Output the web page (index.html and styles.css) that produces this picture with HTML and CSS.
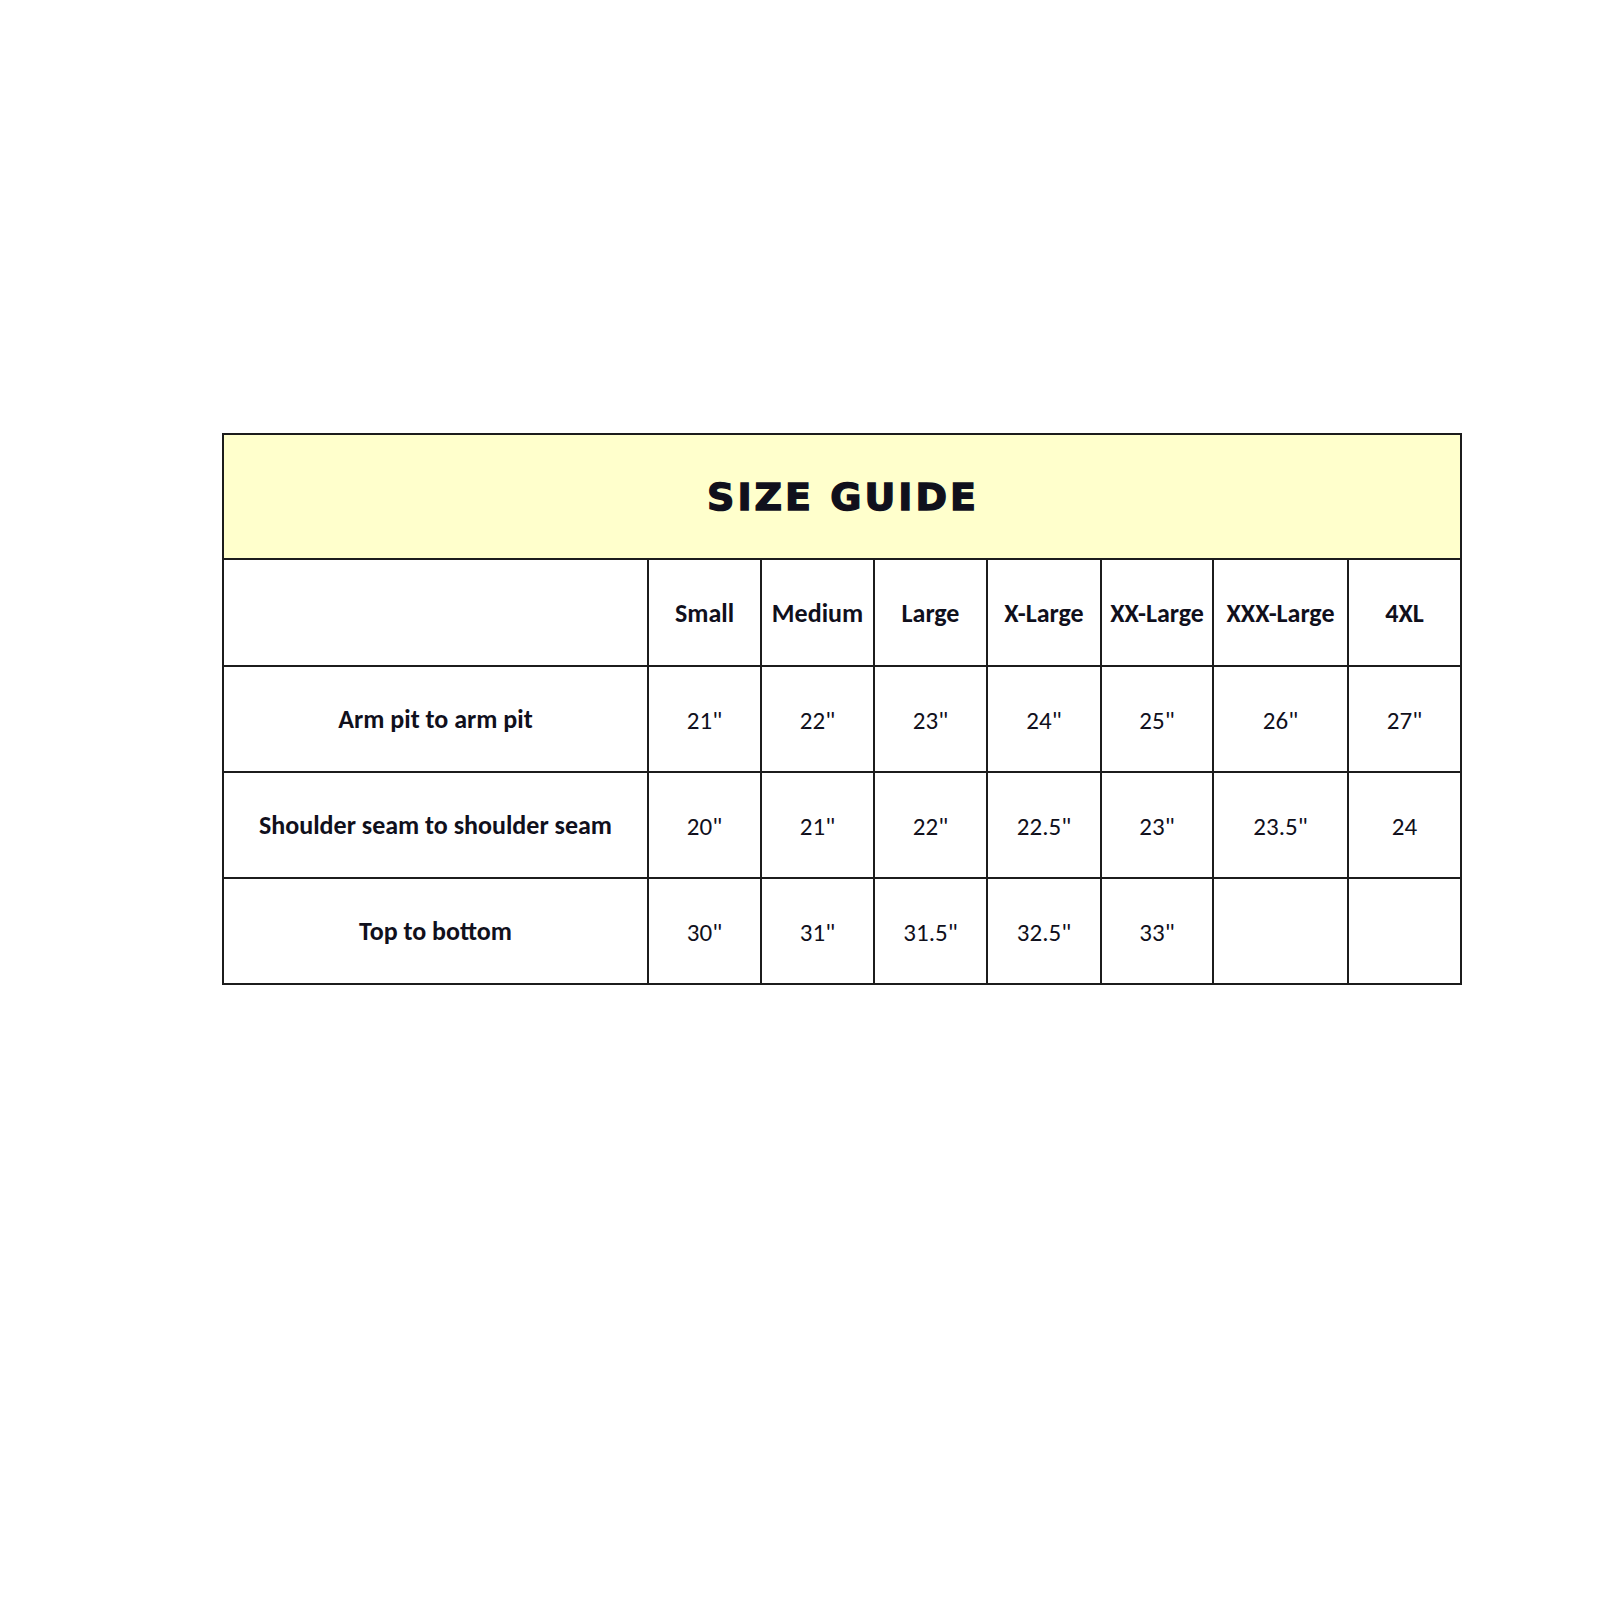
FILE: index.html
```html
<!DOCTYPE html>
<html>
<head>
<meta charset="utf-8">
<link rel="stylesheet" href="styles.css">
</head>
<body>
<div class="page">
  <div class="sheet">
    <div class="title">SIZE GUIDE</div>
    <div class="cell"></div>
    <div class="cell head">Small</div>
    <div class="cell head">Medium</div>
    <div class="cell head">Large</div>
    <div class="cell head">X-Large</div>
    <div class="cell head">XX-Large</div>
    <div class="cell head">XXX-Large</div>
    <div class="cell head">4XL</div>

    <div class="cell label">Arm pit to arm pit</div>
    <div class="cell val">21"</div>
    <div class="cell val">22"</div>
    <div class="cell val">23"</div>
    <div class="cell val">24"</div>
    <div class="cell val">25"</div>
    <div class="cell val">26"</div>
    <div class="cell val">27"</div>

    <div class="cell label">Shoulder seam to shoulder seam</div>
    <div class="cell val">20"</div>
    <div class="cell val">21"</div>
    <div class="cell val">22"</div>
    <div class="cell val">22.5"</div>
    <div class="cell val">23"</div>
    <div class="cell val">23.5"</div>
    <div class="cell val">24</div>

    <div class="cell label">Top to bottom</div>
    <div class="cell val">30"</div>
    <div class="cell val">31"</div>
    <div class="cell val">31.5"</div>
    <div class="cell val">32.5"</div>
    <div class="cell val">33"</div>
    <div class="cell val"></div>
    <div class="cell val"></div>
  </div>
</div>
</body>
</html>
```
FILE: styles.css
```css
html, body {
  margin: 0;
  padding: 0;
  background: #ffffff;
}
.page {
  width: 1600px;
  height: 1600px;
  padding: 433px 0 0 222px;
  box-sizing: border-box;
}
.sheet {
  display: grid;
  width: 1240px;
  box-sizing: border-box;
  grid-template-columns: 423px 111px 111px 111px 112px 110px 133px 111px;
  grid-template-rows: 123px 105px 104px 104px 104px;
  gap: 2px;
  padding: 2px;
  background: #1c1c1c;
  font-family: "Carlito", "Lato", "Open Sans", sans-serif;
  color: #10101c;
}
.title {
  grid-column: 1 / -1;
  background: #ffffcc;
  display: flex;
  align-items: center;
  justify-content: center;
  font-family: "DejaVu Sans", "Liberation Sans", sans-serif;
  font-weight: 700;
  font-size: 38px;
  letter-spacing: 3px;
  -webkit-text-stroke: 1.4px #10101c;
  padding-left: 2px;
}
.cell {
  background: #ffffff;
  display: flex;
  align-items: center;
  justify-content: center;
  white-space: nowrap;
}
.head, .label {
  font-weight: 700;
  font-size: 26px;
}
.val {
  font-weight: 400;
  font-size: 25px;
  padding-top: 2px;
}
```
